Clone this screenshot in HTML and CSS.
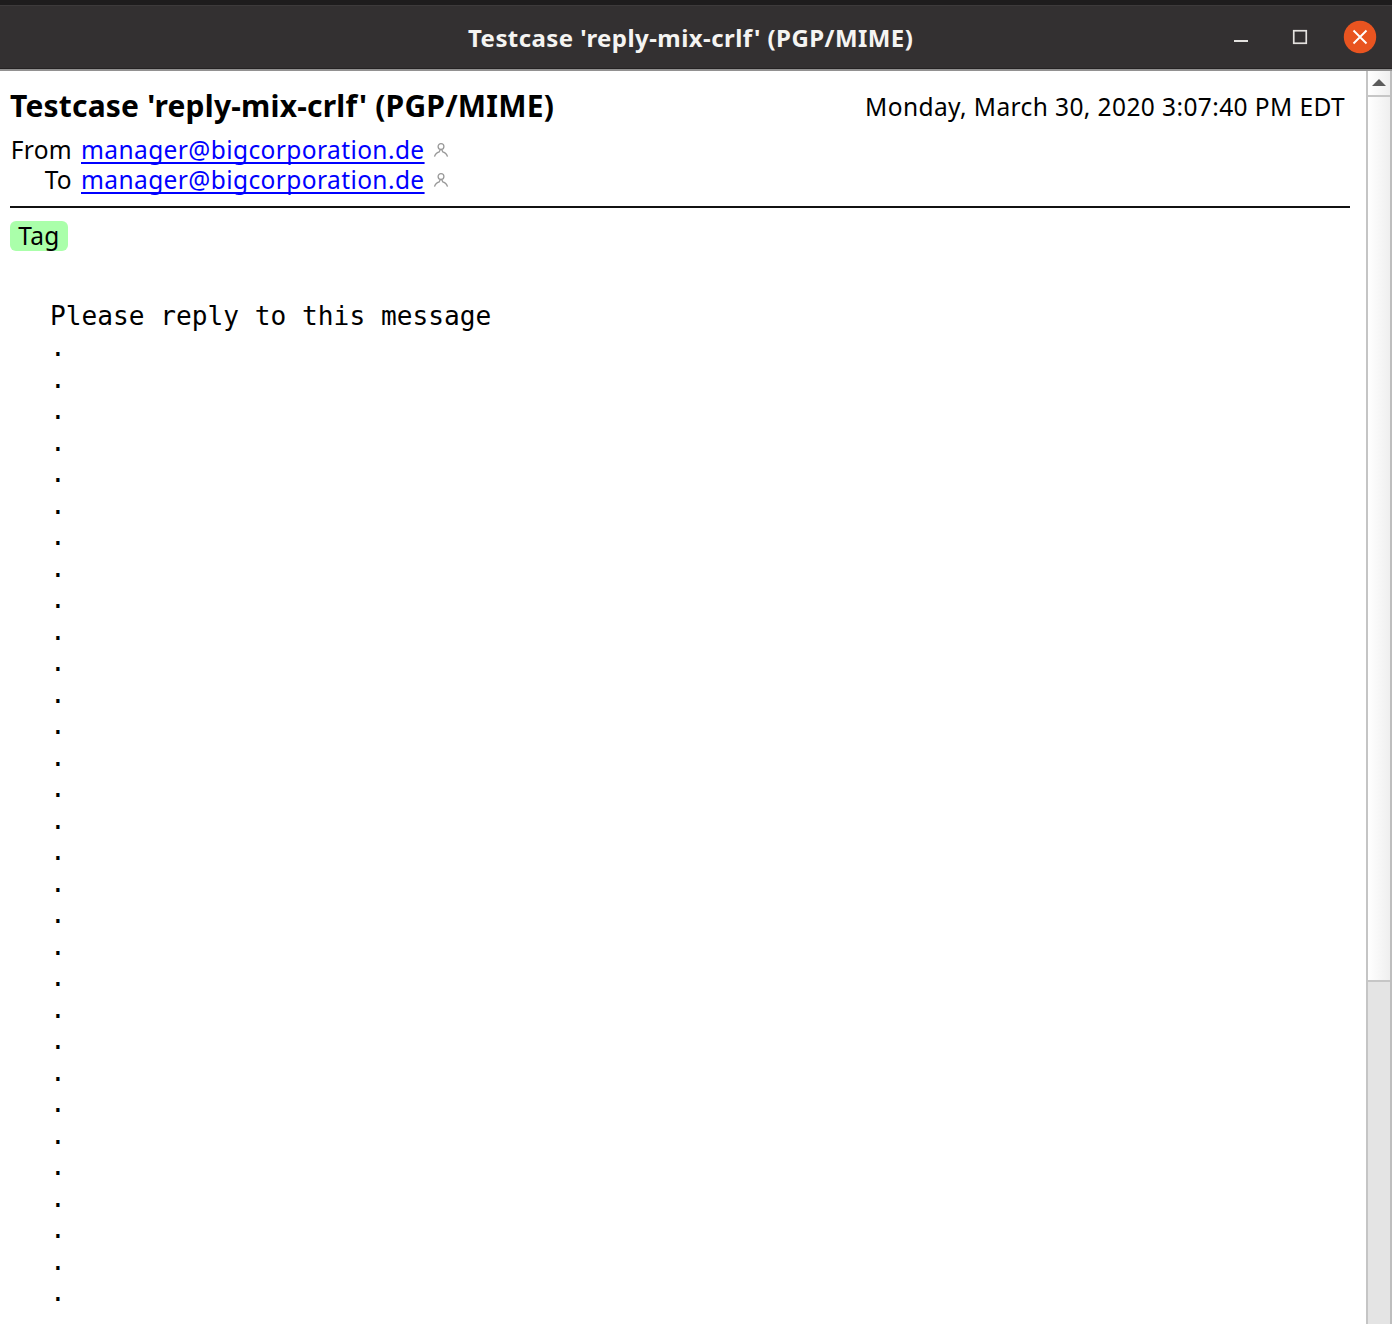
FILE: index.html
```
<!DOCTYPE html>
<html lang="en">
<head>
<meta charset="utf-8">
<title>Testcase 'reply-mix-crlf' (PGP/MIME)</title>
<link rel="stylesheet" href="styles.css">
</head>
<body>
<div class="window">
  <header class="titlebar">
    <div class="caption"><span class="caption-text">Testcase 'reply-mix-crlf' (PGP/MIME)</span></div>
    <div class="controls">
      <svg class="minimize" width="16" height="16" viewBox="0 0 16 16"><path d="M1 12h14" stroke="#e4e2df" stroke-width="2"/></svg>
      <svg class="maximize" width="16" height="16" viewBox="0 0 16 16"><rect x="1.75" y="1.75" width="12.5" height="12.5" fill="none" stroke="#e4e2df" stroke-width="1.7"/></svg>
      <svg class="close" width="34" height="34" viewBox="0 0 34 34"><circle cx="17" cy="17" r="16.2" fill="#e95420"/><path d="M10.5 10.5l13 13M23.5 10.5l-13 13" stroke="#fff" stroke-width="1.9"/></svg>
    </div>
  </header>
  <div class="content">
    <main class="message">
      <div class="heading">
        <h1 class="subject"><span>Testcase 'reply-mix-crlf' (PGP/MIME)</span></h1>
        <time class="date">Monday, March 30, 2020 3:07:40 PM EDT</time>
      </div>
      <div class="addresses">
        <span class="label">From</span>
        <span class="party"><a class="address">manager@bigcorporation.de</a><svg class="person" width="16" height="16" viewBox="0 0 16 16"><circle cx="8" cy="4.5" r="2.9"/><path d="M1.5 14.7C2 12.5 3.8 10.7 6.2 9.9L7.2 7.7h1.6l1 2.2c2.4.8 4.2 2.6 4.7 4.8"/></svg></span>
        <span class="label">To</span>
        <span class="party"><a class="address">manager@bigcorporation.de</a><svg class="person" width="16" height="16" viewBox="0 0 16 16"><circle cx="8" cy="4.5" r="2.9"/><path d="M1.5 14.7C2 12.5 3.8 10.7 6.2 9.9L7.2 7.7h1.6l1 2.2c2.4.8 4.2 2.6 4.7 4.8"/></svg></span>
      </div>
      <div class="rule"></div>
      <span class="tag">Tag</span>
      <pre class="body">Please reply to this message
.
.
.
.
.
.
.
.
.
.
.
.
.
.
.
.
.
.
.
.
.
.
.
.
.
.
.
.
.
.
.</pre>
    </main>
    <aside class="scrollbar">
      <div class="scroll-up"><svg width="14" height="7" viewBox="0 0 14 7"><path d="M0 7L7 0l7 7z" fill="#5b5b5b"/></svg></div>
      <div class="thumb"></div>
      <div class="track"></div>
    </aside>
  </div>
</div>
</body>
</html>
```
FILE: styles.css
```
* { box-sizing: border-box; }

body {
  margin: 0;
  overflow: hidden;
  background: #fff;
  color: #000;
  font-family: "Noto Sans", "Open Sans", sans-serif;
  font-size: 24.5px;
}

.window {
  display: flex;
  flex-direction: column;
  height: 1324px;
}

.titlebar {
  display: grid;
  grid-template-columns: 1fr auto;
  flex: none;
  height: 71px;
  border-top: 5px solid #1e1c1d;
  border-bottom: 2px solid #929191;
  background: #333031;
  box-shadow: inset 0 1px #3d3a3b, inset 0 -1px #252223;
}

.caption {
  padding: 16px 0 0 468px;
  color: #f5f4f2;
  font-weight: 700;
  font-size: 24px;
  line-height: 34px;
  white-space: nowrap;
}

.caption-text { letter-spacing: 0.44px; }

.controls {
  display: flex;
  padding: 15px 15px 0 0;
}

.minimize { margin: 9px 43px 0 0; }
.maximize { margin: 9px 35px 0 0; }

.content {
  display: flex;
  flex: 1;
  min-height: 0;
}

.message {
  flex: 1;
  overflow: hidden;
  padding: 15px 16px 0 10px;
}

.heading {
  display: flex;
  justify-content: space-between;
  height: 49px;
  padding-right: 5px;
  line-height: 40px;
  white-space: nowrap;
}

.subject {
  margin: 0;
  font-size: 30px;
  letter-spacing: 0.2px;
}

.date {
  letter-spacing: 0.4px;
  line-height: 41px;
}

.addresses {
  display: grid;
  grid-template-columns: 62px auto;
  column-gap: 9px;
  grid-auto-rows: 30px;
  line-height: 30px;
}

.label {
  letter-spacing: 0.3px;
  text-align: right;
}

.party {
  display: flex;
  gap: 8px;
}

.address {
  color: #00f;
  letter-spacing: 0.4px;
  text-decoration: underline;
  text-decoration-thickness: 1.5px;
  text-underline-offset: 3px;
  text-decoration-skip-ink: none;
}

.person {
  margin-top: 7px;
  fill: none;
  stroke: #999;
  stroke-width: 1.3;
}

.rule {
  height: 2px;
  margin-top: 11px;
  background: #111;
}

.tag {
  display: block;
  width: 58px;
  height: 30px;
  margin-top: 13px;
  border-radius: 6px;
  background: #aaffaa;
  letter-spacing: 0.3px;
  line-height: 29px;
  text-align: center;
}

.body {
  margin: 49.5px 0 0 40px;
  font-family: "DejaVu Sans Mono", monospace;
  font-size: 26.18px;
  line-height: 31.5px;
}

.scrollbar {
  display: flex;
  flex-direction: column;
  width: 26px;
  border-left: 2px solid #c5c5c5;
  border-right: 2px solid #bdbdbd;
}

.scroll-up {
  display: flex;
  justify-content: center;
  height: 26px;
  padding: 8px 1px 0 0;
  border-bottom: 2px solid #c6c6c6;
  background: linear-gradient(to right, #fff, #efefef);
}

.thumb {
  height: 885px;
  border-bottom: 2px solid #c6c6c6;
  background: linear-gradient(to right, #fff, #efefef);
}

.track {
  flex: 1;
  background: #e4e4e4;
}
```
